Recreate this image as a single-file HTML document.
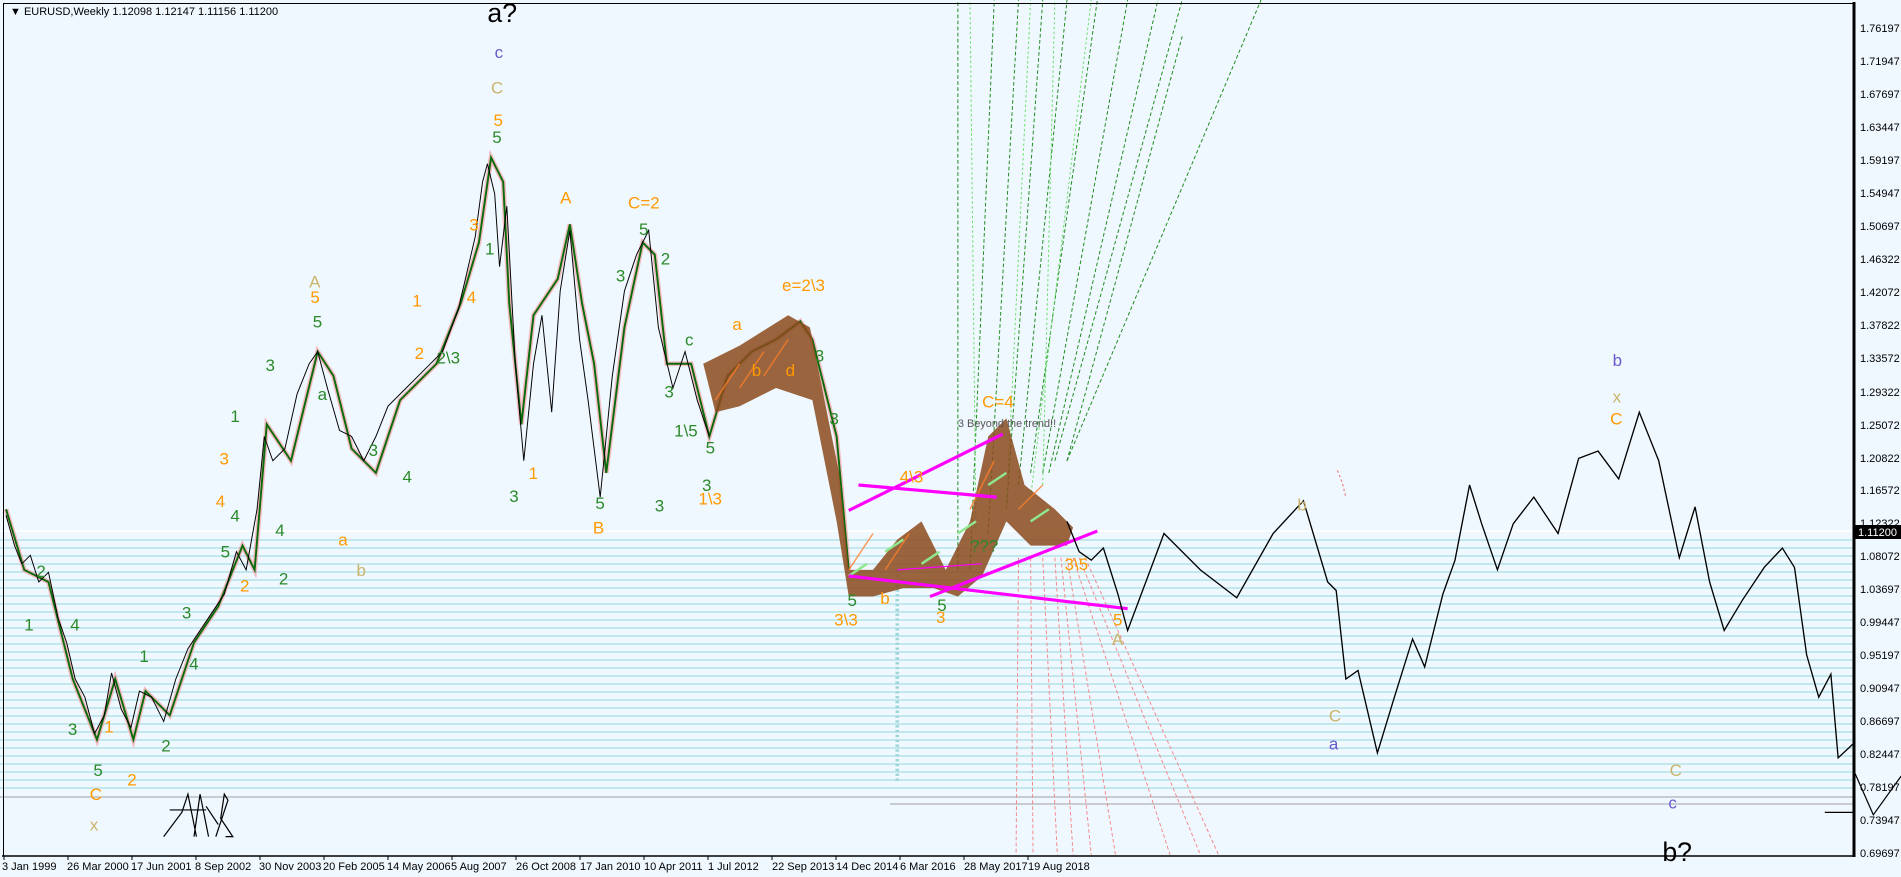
<!DOCTYPE html>
<html><head><meta charset="utf-8"><style>
html,body{margin:0;padding:0;background:#f0f8ff;width:1901px;height:877px;overflow:hidden}
svg{display:block}
text{font-family:"Liberation Sans",sans-serif}
</style></head><body>
<svg width="1901" height="877" viewBox="0 0 1901 877" xmlns="http://www.w3.org/2000/svg">
<rect width="1901" height="877" fill="#f0f8ff"/>
<g stroke="#a6dde2" stroke-width="1.2">
<line x1="0" y1="540" x2="1854" y2="540"/><line x1="0" y1="548" x2="1854" y2="548"/><line x1="0" y1="556" x2="1854" y2="556"/><line x1="0" y1="564" x2="1854" y2="564"/><line x1="0" y1="572" x2="1854" y2="572"/><line x1="0" y1="580" x2="1854" y2="580"/><line x1="0" y1="588" x2="1854" y2="588"/><line x1="0" y1="596" x2="1854" y2="596"/><line x1="0" y1="604" x2="1854" y2="604"/><line x1="0" y1="612" x2="1854" y2="612"/><line x1="0" y1="620" x2="1854" y2="620"/><line x1="0" y1="628" x2="1854" y2="628"/><line x1="0" y1="636" x2="1854" y2="636"/><line x1="0" y1="644" x2="1854" y2="644"/><line x1="0" y1="652" x2="1854" y2="652"/><line x1="0" y1="660" x2="1854" y2="660"/><line x1="0" y1="668" x2="1854" y2="668"/><line x1="0" y1="676" x2="1854" y2="676"/><line x1="0" y1="684" x2="1854" y2="684"/><line x1="0" y1="692" x2="1854" y2="692"/><line x1="0" y1="700" x2="1854" y2="700"/><line x1="0" y1="708" x2="1854" y2="708"/><line x1="0" y1="716" x2="1854" y2="716"/><line x1="0" y1="724" x2="1854" y2="724"/><line x1="0" y1="732" x2="1854" y2="732"/><line x1="0" y1="740" x2="1854" y2="740"/><line x1="0" y1="748" x2="1854" y2="748"/><line x1="0" y1="756" x2="1854" y2="756"/><line x1="0" y1="764" x2="1854" y2="764"/><line x1="0" y1="772" x2="1854" y2="772"/><line x1="0" y1="780" x2="1854" y2="780"/><line x1="0" y1="788" x2="1854" y2="788"/>
</g>
<line x1="0" y1="531" x2="1854" y2="531" stroke="#fff" stroke-width="1.5"/>
<line x1="0" y1="797" x2="1854" y2="797" stroke="#a0a0a0"/>
<line x1="890" y1="804" x2="1854" y2="804" stroke="#a0a0a0"/>

<g transform="scale(1.2125)">
<g stroke="#1a8a1a" stroke-width="0.8" stroke-dasharray="3,2" fill="none">
<line x1="790" y1="470" x2="790" y2="0"/><line x1="800" y1="470" x2="820" y2="0"/><line x1="815" y1="440" x2="840" y2="0"/><line x1="830" y1="420" x2="860" y2="0"/><line x1="840" y1="400" x2="880" y2="0"/><line x1="850" y1="390" x2="905" y2="0"/><line x1="860" y1="390" x2="930" y2="0"/><line x1="865" y1="390" x2="955" y2="0"/><line x1="870" y1="380" x2="975" y2="0"/><line x1="880" y1="380" x2="975" y2="30"/><line x1="880" y1="380" x2="1040" y2="0"/>
</g>
<g stroke="#66dd66" stroke-width="0.8" stroke-dasharray="2,2" fill="none">
<line x1="805" y1="440" x2="800" y2="0"/><line x1="830" y1="420" x2="850" y2="0"/><line x1="850" y1="410" x2="900" y2="0"/><line x1="860" y1="400" x2="870" y2="0"/>
</g>
<g stroke="#f28888" stroke-width="0.8" stroke-dasharray="3,2" fill="none">
<line x1="840" y1="460" x2="838" y2="705"/><line x1="850" y1="460" x2="852" y2="705"/><line x1="860" y1="460" x2="872" y2="705"/><line x1="870" y1="460" x2="885" y2="705"/><line x1="875" y1="460" x2="900" y2="705"/><line x1="880" y1="460" x2="920" y2="705"/><line x1="885" y1="460" x2="965" y2="705"/><line x1="890" y1="460" x2="990" y2="705"/><line x1="895" y1="460" x2="1005" y2="705"/>
</g>
<line x1="740" y1="470" x2="740" y2="645" stroke="#9fd6da" stroke-width="3" stroke-dasharray="2,2"/>
<polyline fill="none" stroke="#f4a0a8" stroke-width="4" opacity="0.7" points="5,420 20,470 40,480 60,560 80,610 95,560 110,610 120,570 140,590 160,530 180,500 200,450 210,470 220,350 240,380 262,290 275,310 290,370 310,390 330,330 360,300 380,250 395,200 405,130 415,150 420,250 430,350 440,260 460,230 470,185 480,250 490,300 500,390 515,270 530,200 540,210 550,300 570,300 585,360 600,310 620,290 640,280 660,265 670,280 690,360 700,470"/>
<polyline fill="none" stroke="#0a6b0a" stroke-width="1.6" points="5,420 20,470 40,480 60,560 80,610 95,560 110,610 120,570 140,590 160,530 180,500 200,450 210,470 220,350 240,380 262,290 275,310 290,370 310,390 330,330 360,300 380,250 395,200 405,130 415,150 420,250 430,350 440,260 460,230 470,185 480,250 490,300 500,390 515,270 530,200 540,210 550,300 570,300 585,360 600,310 620,290 640,280 660,265 670,280 690,360 700,470"/>
<polyline fill="none" stroke="#000" stroke-width="0.8" points="5,425 12,450 18,465 25,458 32,480 40,472 48,510 55,530 62,560 70,575 78,605 86,590 92,555 100,585 108,600 115,570 125,575 135,595 145,560 155,535 165,520 175,505 185,490 195,455 203,470 212,420 218,360 225,380 235,370 245,325 255,300 262,290 270,320 280,355 290,360 300,380 310,360 320,335 335,320 350,305 365,290 378,255 385,225 392,195 398,150 402,135 408,160 412,220 418,170 425,300 432,380 440,300 447,260 455,340 462,240 470,190 478,280 485,330 495,410 505,310 515,240 525,210 535,190 543,270 555,320 565,290 575,330 585,360"/>
<path d="M580,300 L610,285 L650,260 L668,270 L680,330 L692,390 L700,470 L720,470 L740,445 L760,430 L780,470 L800,430 L815,360 L830,345 L845,400 L870,420 L885,435 L880,450 L850,450 L830,430 L810,475 L790,492 L770,485 L745,485 L720,492 L700,492 L690,430 L670,330 L640,320 L610,335 L590,340 Z" fill="#8b4a1c" opacity="0.85"/>
<g stroke="#ff7f2a" stroke-width="1.2" opacity="0.8">
<line x1="590" y1="330" x2="610" y2="300"/><line x1="610" y1="320" x2="630" y2="290"/><line x1="630" y1="310" x2="650" y2="280"/><line x1="700" y1="470" x2="720" y2="440"/><line x1="730" y1="470" x2="750" y2="440"/><line x1="800" y1="420" x2="820" y2="380"/><line x1="840" y1="420" x2="860" y2="400"/>
</g>
<g stroke="#8fe88f" stroke-width="2">
<line x1="700" y1="475" x2="715" y2="465"/><line x1="730" y1="455" x2="745" y2="445"/><line x1="760" y1="465" x2="775" y2="455"/><line x1="790" y1="440" x2="805" y2="430"/><line x1="815" y1="400" x2="830" y2="390"/><line x1="850" y1="430" x2="865" y2="420"/>
</g>
<g stroke="#ff00ff" stroke-width="2.6">
<line x1="700" y1="421" x2="827" y2="358"/><line x1="708" y1="400" x2="822" y2="410"/><line x1="700" y1="475" x2="930" y2="502"/><line x1="767" y1="492" x2="905" y2="438"/>
</g>
<line x1="740" y1="470" x2="810" y2="465" stroke="#ff00ff" stroke-width="1"/>
<polyline fill="none" stroke="#000" stroke-width="1.1" points="880,430 890,455 900,462 910,452 922,490 930,520 960,440 990,470 1020,493 1050,440 1075,413 1095,480 1102,487 1110,560 1120,553 1136,621 1150,575 1165,527 1175,550 1190,490 1200,462 1212,400 1222,432 1235,470 1248,432 1265,410 1285,440 1302,378 1318,372 1335,395 1352,340 1368,380 1385,460 1398,418 1410,480 1422,520 1437,495 1455,468 1470,452 1480,468 1490,540 1500,575 1510,556 1516,625 1530,612"/>
<polyline fill="none" stroke="#000" stroke-width="1" points="1530,638 1545,672 1568,640"/>
<line x1="1505" y1="670" x2="1530" y2="670" stroke="#000"/>
<path d="M135,690 L150,670 L155,655 L162,690 M140,668 L170,668 M160,690 L165,655 L172,690 M170,665 L180,680 M178,690 L188,660 L185,655 L182,675 L192,690 L186,690" fill="none" stroke="#000" stroke-width="1"/>
<path d="M1103,388 L1107,398 L1110,410" stroke="#f08080" stroke-dasharray="2,2" fill="none"/>
<g font-size="14" fill="#ff9900">
<text x="407" y="104">5</text><text x="462" y="168">A</text><text x="518" y="172">C=2</text><text x="645" y="240">e=2\3</text><text x="256" y="250">5</text><text x="181" y="383">3</text><text x="178" y="418">4</text><text x="198" y="488">2</text><text x="340" y="253">1</text><text x="342" y="296">2</text><text x="436" y="395">1</text><text x="489" y="440">B</text><text x="576" y="416">1\3</text><text x="688" y="516">3\3</text><text x="726" y="498">b</text><text x="772" y="514">3</text><text x="810" y="336">C=4</text><text x="742" y="398">4\3</text><text x="878" y="470">3\5</text><text x="918" y="516">5</text><text x="1328" y="350">C</text><text x="86" y="604">1</text><text x="105" y="648">2</text><text x="74" y="660">C</text><text x="279" y="450">a</text><text x="387" y="190">3</text><text x="385" y="250">4</text><text x="604" y="272">a</text><text x="620" y="310">b</text><text x="648" y="310">d</text>
</g>
<g font-size="14" fill="#2a8a2a">
<text x="30" y="476">2</text><text x="20" y="520">1</text><text x="58" y="520">4</text><text x="56" y="606">3</text><text x="77" y="640">5</text><text x="133" y="620">2</text><text x="115" y="546">1</text><text x="150" y="510">3</text><text x="156" y="552">4</text><text x="182" y="460">5</text><text x="190" y="430">4</text><text x="230" y="482">2</text><text x="190" y="348">1</text><text x="219" y="306">3</text><text x="227" y="442">4</text><text x="258" y="270">5</text><text x="262" y="330">a</text><text x="304" y="376">3</text><text x="332" y="398">4</text><text x="406" y="118">5</text><text x="420" y="414">3</text><text x="491" y="420">5</text><text x="508" y="232">3</text><text x="527" y="194">5</text><text x="545" y="218">2</text><text x="565" y="285">c</text><text x="548" y="328">3</text><text x="556" y="360">1\5</text><text x="582" y="374">5</text><text x="579" y="405">3</text><text x="540" y="422">3</text><text x="699" y="500">5</text><text x="773" y="504">5</text><text x="800" y="455">???</text><text x="360" y="300">2\3</text><text x="400" y="210">1</text><text x="672" y="298">3</text><text x="684" y="350">3</text>
</g>
<g font-size="14" fill="#c8b46a">
<text x="255" y="237">A</text><text x="405" y="77">C</text><text x="1070" y="421">b</text><text x="1330" y="332">x</text><text x="1096" y="595">C</text><text x="1377" y="640">C</text><text x="917" y="532">A</text><text x="74" y="685">x</text><text x="294" y="475">b</text>
</g>
<g font-size="14" fill="#6a5acd">
<text x="408" y="48">c</text><text x="1330" y="302">b</text><text x="1096" y="618">a</text><text x="1376" y="667">c</text>
</g>
<text x="402" y="18" font-size="22" fill="#000">a?</text>
<text x="1371" y="710" font-size="22" fill="#000">b?</text>
<text x="790" y="352" font-size="9" fill="#555">3 Beyond the trend!!</text>
</g>

<rect x="3.5" y="3.5" width="1850" height="852.5" fill="none" stroke="#000" stroke-width="1"/>
<line x1="1854" y1="2" x2="1854" y2="857" stroke="#000" stroke-width="3"/>
<line x1="2" y1="856" x2="1855" y2="856" stroke="#000" stroke-width="1.5"/>
<text x="10" y="15" font-size="11" fill="#000">▼ EURUSD,Weekly  1.12098 1.12147 1.11156 1.11200</text>
<g font-size="11" fill="#000">
<text x="1860" y="32">1.76197</text><text x="1860" y="65">1.71947</text><text x="1860" y="98">1.67697</text><text x="1860" y="131">1.63447</text><text x="1860" y="164">1.59197</text><text x="1860" y="197">1.54947</text><text x="1860" y="230">1.50697</text><text x="1860" y="263">1.46322</text><text x="1860" y="296">1.42072</text><text x="1860" y="329">1.37822</text><text x="1860" y="362">1.33572</text><text x="1860" y="396">1.29322</text><text x="1860" y="429">1.25072</text><text x="1860" y="462">1.20822</text><text x="1860" y="494">1.16572</text><text x="1860" y="527">1.12322</text><text x="1860" y="560">1.08072</text><text x="1860" y="593">1.03697</text><text x="1860" y="626">0.99447</text><text x="1860" y="659">0.95197</text><text x="1860" y="692">0.90947</text><text x="1860" y="725">0.86697</text><text x="1860" y="758">0.82447</text><text x="1860" y="791">0.78197</text><text x="1860" y="824">0.73947</text><text x="1860" y="857">0.69697</text>
</g>
<rect x="1855" y="525" width="46" height="14" fill="#000"/>
<text x="1858" y="536" font-size="11" fill="#fff">1.11200</text>
<g font-size="11" fill="#000">
<text x="2" y="870">3 Jan 1999</text><text x="67" y="870">26 Mar 2000</text><text x="131" y="870">17 Jun 2001</text><text x="195" y="870">8 Sep 2002</text><text x="259" y="870">30 Nov 2003</text><text x="323" y="870">20 Feb 2005</text><text x="387" y="870">14 May 2006</text><text x="451" y="870">5 Aug 2007</text><text x="516" y="870">26 Oct 2008</text><text x="580" y="870">17 Jan 2010</text><text x="644" y="870">10 Apr 2011</text><text x="708" y="870">1 Jul 2012</text><text x="772" y="870">22 Sep 2013</text><text x="836" y="870">14 Dec 2014</text><text x="900" y="870">6 Mar 2016</text><text x="964" y="870">28 May 2017</text><text x="1028" y="870">19 Aug 2018</text>
</g>
<g stroke="#000"><line x1="4" y1="856" x2="4" y2="860"/><line x1="68" y1="856" x2="68" y2="860"/><line x1="132" y1="856" x2="132" y2="860"/><line x1="196" y1="856" x2="196" y2="860"/><line x1="260" y1="856" x2="260" y2="860"/><line x1="324" y1="856" x2="324" y2="860"/><line x1="388" y1="856" x2="388" y2="860"/><line x1="452" y1="856" x2="452" y2="860"/><line x1="516" y1="856" x2="516" y2="860"/><line x1="580" y1="856" x2="580" y2="860"/><line x1="644" y1="856" x2="644" y2="860"/><line x1="708" y1="856" x2="708" y2="860"/><line x1="772" y1="856" x2="772" y2="860"/><line x1="836" y1="856" x2="836" y2="860"/><line x1="900" y1="856" x2="900" y2="860"/><line x1="964" y1="856" x2="964" y2="860"/><line x1="1028" y1="856" x2="1028" y2="860"/></g>
</svg>
</body></html>
